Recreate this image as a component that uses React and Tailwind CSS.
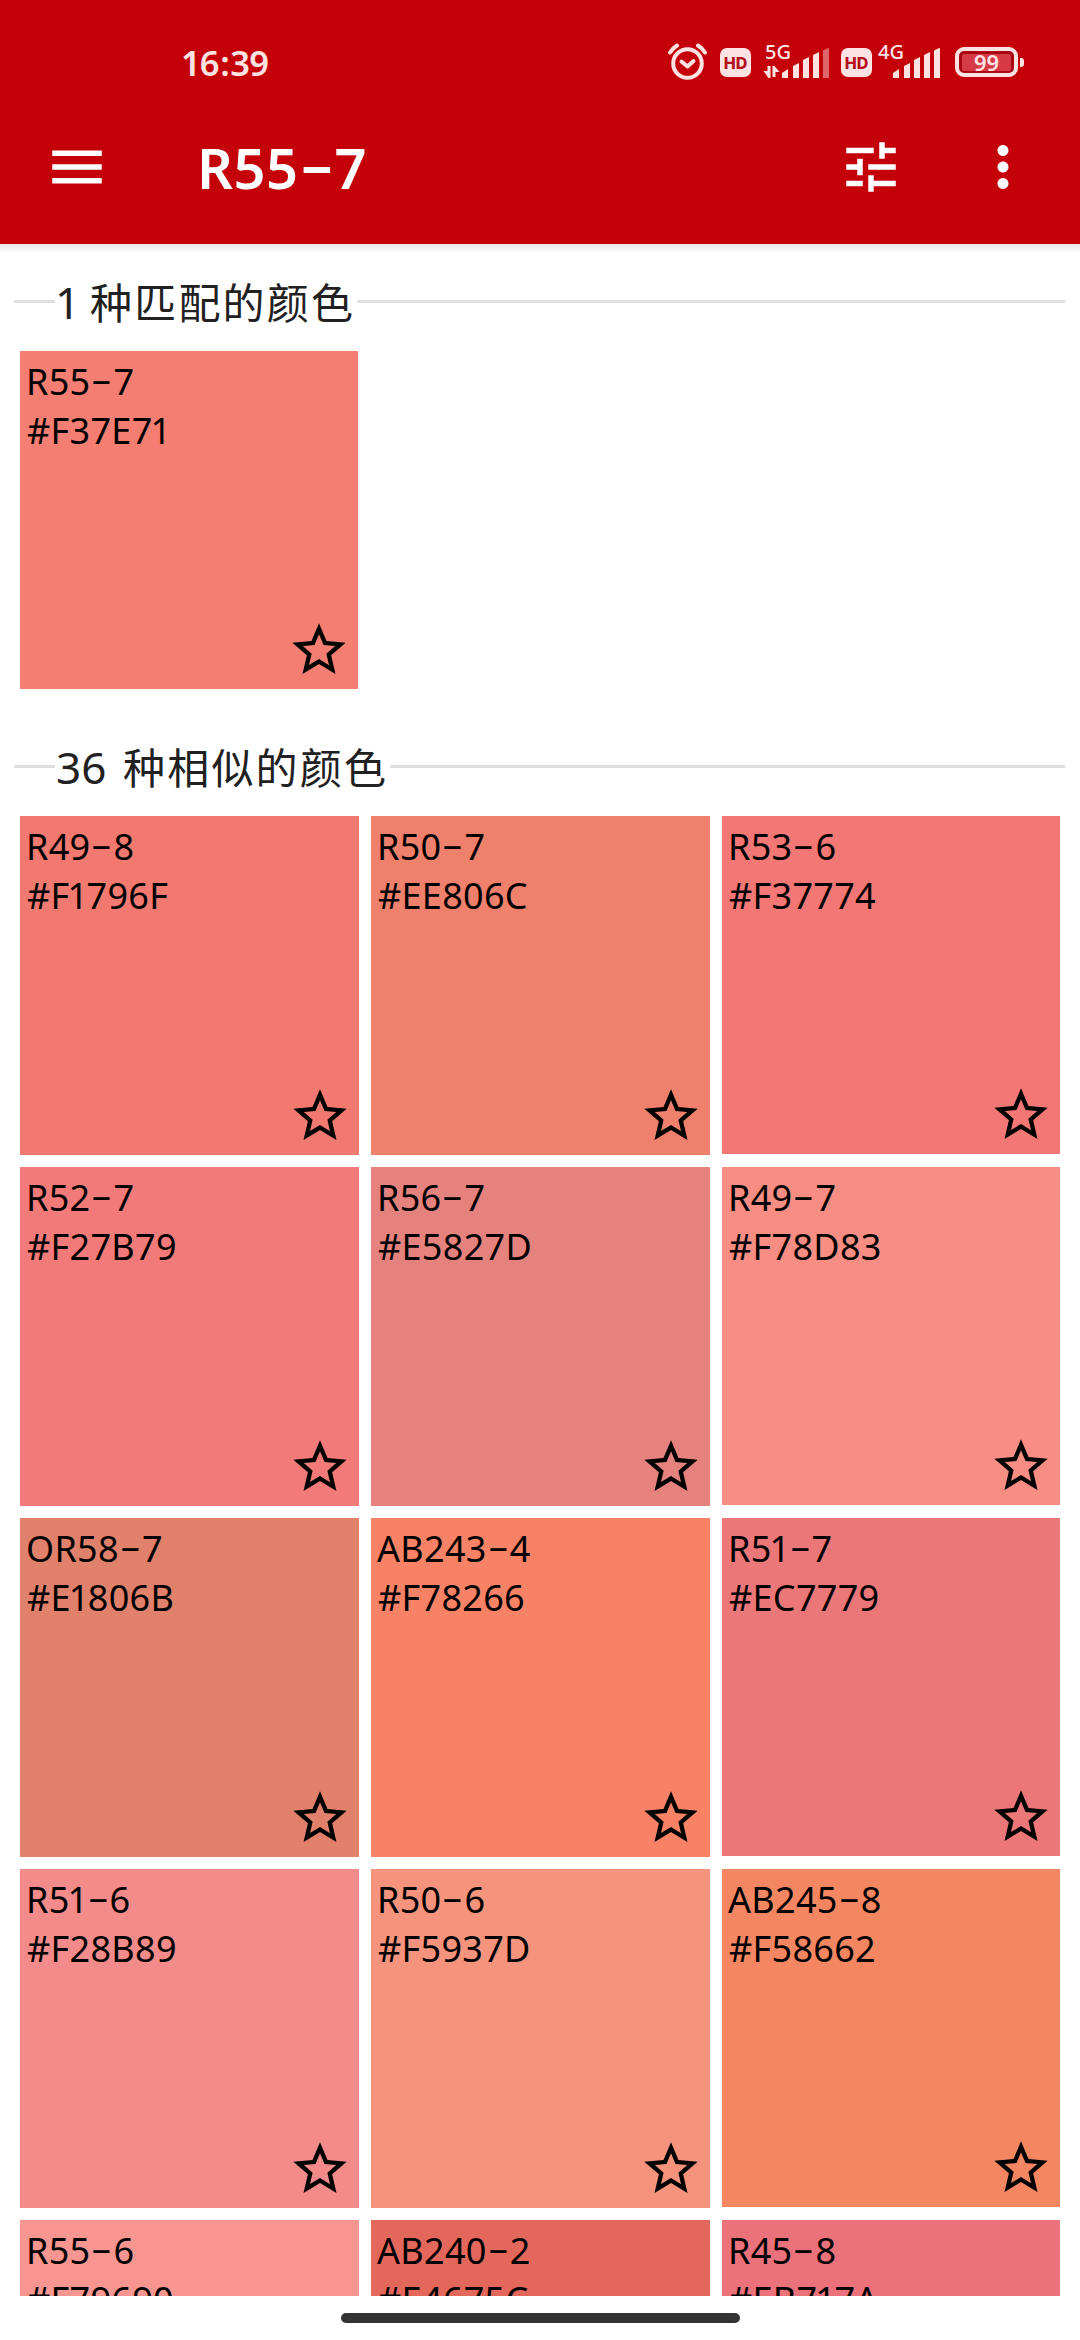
import React from "react";

const matches = [["R55-7", "#F37E71"]];

const similar = [
  ["R49-8", "#F1796F"],
  ["R50-7", "#EE806C"],
  ["R53-6", "#F37774"],
  ["R52-7", "#F27B79"],
  ["R56-7", "#E5827D"],
  ["R49-7", "#F78D83"],
  ["OR58-7", "#E1806B"],
  ["AB243-4", "#F78266"],
  ["R51-7", "#EC7779"],
  ["R51-6", "#F28B89"],
  ["R50-6", "#F5937D"],
  ["AB245-8", "#F58662"],
  ["R55-6", "#F79690"],
  ["AB240-2", "#E4675C"],
  ["R45-8", "#EB717A"],
];

// Narrows the figure one and widens the hyphen.
function Label({ text }) {
  return text.split(/([-1])/).map((part, i) => {
    if (part === "-")
      return (
        <span key={i} className="inline-block w-[0.64em] -translate-y-[0.07em] scale-x-[1.85] text-center tracking-normal">
          -
        </span>
      );
    if (part === "1")
      return (
        <span key={i} className="-ml-[0.06em] -mr-[0.05em]">
          1
        </span>
      );
    return part;
  });
}

function Star() {
  return (
    <svg viewBox="0 0 24 24" className="size-16 fill-black">
      <path d="M22 9.24l-7.19-.62L12 2 9.19 8.63 2 9.24l5.46 4.73L5.82 21 12 17.27 18.18 21l-1.63-7.03L22 9.24zM12 15.4l-3.76 2.27 1-4.28-3.32-2.88 4.38-.38L12 6.1l1.71 4.04 4.38.38-3.32 2.88 1 4.28L12 15.4z" />
    </svg>
  );
}

function Swatch({ name, hex }) {
  return (
    <div className="flex aspect-square flex-col justify-between pt-1.5 pr-[7px] pb-[7px] pl-[6px]" style={{ backgroundColor: hex }}>
      <div className="text-[36px] leading-[49px] tracking-[0.3px] text-black">
        <div>
          <Label text={name} />
        </div>
        <div className="pl-[1px]">
          <Label text={hex} />
        </div>
      </div>
      <div className="self-end">
        <Star />
      </div>
    </div>
  );
}

function Heading({ count, text }) {
  return (
    <div className="mr-[15px] ml-[14px] flex h-[65px] items-center">
      <div className="h-[3px] w-[41px] bg-[#dfdfdf]" />
      <div className="flex items-baseline whitespace-pre pr-[2px] text-[#212121]">
        <span className={count.length > 1 ? "w-[68px] pl-[1px] text-[44px] leading-[60px]" : "w-[35px] text-[44px] leading-[60px]"}>
          {count}
        </span>
        <span className="font-['Noto_Sans_CJK_SC',sans-serif] text-[42px] leading-[60px] tracking-[2.2px]">{text}</span>
      </div>
      <div className="h-[3px] grow bg-[#dfdfdf]" />
    </div>
  );
}

function HdBadge() {
  return (
    <div className="flex h-[29px] w-[31px] items-center justify-center rounded-[7px] bg-[#ffe3e3] font-['Inter',sans-serif] text-[16px] font-extrabold text-[#b5101c]">
      HD
    </div>
  );
}

function Signal({ weak }) {
  return (
    <svg viewBox="0 0 49 31" className="h-[31px] w-[49px] fill-[#ffe3e3]">
      <path d="M1 25l6-4v9H1z" />
      <path d="M12 18l6-3v15h-6z" />
      <path d="M22 12l6-3v21h-6z" />
      <path d="M32 7l6-3v26h-6z" />
      <path d="M42 3q0-1 1-1l4-2q1 0 1 1v29h-6z" className={weak ? "opacity-45" : ""} />
    </svg>
  );
}

function StatusBar() {
  return (
    <div className="flex h-[123px] items-start pl-[181px] text-[#ffe3e3]">
      <div className="mt-[38px] w-[486px] text-[34.5px] leading-[49px] font-semibold tracking-[-0.9px]">
        16<span className="px-[1.5px]">:</span>39
      </div>
      <svg viewBox="0 0 40 38" className="mt-[43px] h-[38px] w-[40px] fill-none stroke-[#ffe3e3] stroke-[4]">
        <circle cx="20.5" cy="20.5" r="14.3" />
        <path d="M3 9.5Q6 5 10 2.5M31 2.5Q35 5 38 9.5" strokeLinecap="round" />
        <path d="M14.5 18.5l6 5 6-5.5" strokeLinecap="round" strokeLinejoin="round" />
      </svg>
      <div className="mt-[48px] ml-[13px]">
        <HdBadge />
      </div>
      <div className="relative mt-[48px] ml-[12px] flex">
        <span className="absolute -top-[9px] left-[2px] text-[20px] leading-[26px] font-medium">5G</span>
        <svg viewBox="0 0 17 31" className="h-[31px] w-[18px] fill-[#ffe3e3]">
          <path d="M4 18h3v12H5L0 23h4zM9 29V18h2l5 6h-4v5z" />
        </svg>
        <Signal weak />
      </div>
      <div className="mt-[48px] ml-[11px]">
        <HdBadge />
      </div>
      <div className="relative mt-[48px] ml-[20px]">
        <span className="absolute -top-[9px] -left-[14px] text-[20px] leading-[26px] font-medium">4G</span>
        <Signal />
      </div>
      <div className="mt-[47px] ml-[14px] flex items-center gap-[2px]">
        <div className="flex h-[30px] w-[63px] items-center justify-center rounded-[9px] border-4 border-[#ffe3e3] bg-[#a90713] p-[3px]">
          <div className="flex h-[17px] w-full items-center justify-center rounded-[2px] bg-[#d63a47] text-[22px] font-semibold">
            99
          </div>
        </div>
        <div className="h-[9px] w-[4px] rounded-r-[3px] bg-[#ffe3e3]" />
      </div>
    </div>
  );
}

function Toolbar() {
  return (
    <div className="flex h-[88px] items-center pr-[44px] pl-[44px] text-white">
      <svg viewBox="0 0 24 24" className="size-[66px] fill-white">
        <path d="M3 18h18v-2H3v2zm0-5h18v-2H3v2zm0-7v2h18V6H3z" />
      </svg>
      <h1 className="ml-[87px] grow text-[56px] leading-[76px] font-semibold tracking-[0.5px]">
        <Label text="R55-7" />
      </h1>
      <svg viewBox="0 0 24 24" className="size-[66px] fill-white">
        <path d="M3 17v2h6v-2H3zM3 5v2h10V5H3zm10 16v-2h8v-2h-8v-2h-2v6h2zM7 9v2H3v2h4v2h2V9H7zm14 4v-2H11v2h10zm-6-4h2V7h4V5h-4V3h-2v6z" />
      </svg>
      <svg viewBox="0 0 24 24" className="ml-[66px] size-[66px] fill-white">
        <path d="M12 8c1.1 0 2-.9 2-2s-.9-2-2-2-2 .9-2 2 .9 2 2 2zm0 2c-1.1 0-2 .9-2 2s.9 2 2 2 2-.9 2-2-.9-2-2-2zm0 6c-1.1 0-2 .9-2 2s.9 2 2 2 2-.9 2-2-.9-2-2-2z" />
      </svg>
    </div>
  );
}

export default function App() {
  return (
    <div className="flex h-[2340px] w-[1080px] flex-col overflow-hidden bg-white font-['Noto_Sans','Noto_Sans_CJK_SC',sans-serif]">
      <header className="h-[244px] shrink-0 bg-[#c40009]">
        <StatusBar />
        <Toolbar />
      </header>
      <div className="h-[10px] shrink-0 bg-linear-to-b from-[#e8e8e8] to-white" />
      <main className="h-[2042px] shrink-0 overflow-hidden pt-[15px]">
        <Heading count="1" text="种匹配的颜色" />
        <div className="mt-[17px] grid grid-cols-[338px] px-5">
          {matches.map(([name, hex]) => (
            <Swatch key={name} name={name} hex={hex} />
          ))}
        </div>
        <div className="mt-[45px]">
          <Heading count="36" text="种相似的颜色" />
        </div>
        <div className="mt-[17px] grid grid-cols-[339px_339px_338px] gap-3 px-5">
          {similar.map(([name, hex]) => (
            <Swatch key={name} name={name} hex={hex} />
          ))}
        </div>
      </main>
      <footer className="flex h-11 shrink-0 justify-center pt-[17px]">
        <div className="h-[10px] w-[399px] rounded-full bg-[#333]" />
      </footer>
    </div>
  );
}
